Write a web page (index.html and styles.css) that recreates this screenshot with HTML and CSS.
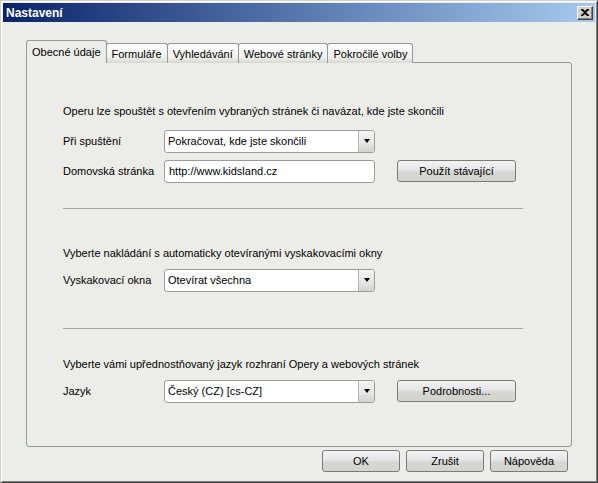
FILE: index.html
```html
<!DOCTYPE html>
<html lang="cs">
<head>
  <meta charset="UTF-8">
  <title>Nastavení</title>
  <link rel="stylesheet" href="styles.css">
</head>
<body>
  <div class="window">
    <div class="titlebar">
      <span class="title">Nastavení</span>
      <span class="close-btn">
        <svg width="8" height="7" viewBox="0 0 8 7"><path d="M0 0h2l2 2 2-2h2v1L5 3.5 8 6v1H6L4 5 2 7H0V6l3-2.5L0 1z" fill="#000"/></svg>
      </span>
    </div>
    <div class="content">
      <div class="tabs">
        <div class="tab active">Obecné údaje</div>
        <div class="tab">Formuláře</div>
        <div class="tab">Vyhledávání</div>
        <div class="tab">Webové stránky</div>
        <div class="tab">Pokročilé volby</div>
      </div>
      <div class="panel">
        <div class="section">
          <p class="desc">Operu lze spouštět s otevřením vybraných stránek či navázat, kde jste skončili</p>
          <div class="row">
            <span class="label">Při spuštění</span>
            <div class="select"><span class="value">Pokračovat, kde jste skončili</span><span class="arrow"></span></div>
          </div>
          <div class="row">
            <span class="label">Domovská stránka</span>
            <div class="field">http://www.kidsland.cz</div>
            <button class="btn side-btn">Použít stávající</button>
          </div>
        </div>
        <hr class="sep sep-first">
        <div class="section">
          <p class="desc desc-tight">Vyberte nakládání s automaticky otevíranými vyskakovacími okny</p>
          <div class="row">
            <span class="label">Vyskakovací okna</span>
            <div class="select"><span class="value">Otevírat všechna</span><span class="arrow"></span></div>
          </div>
        </div>
        <hr class="sep sep-second">
        <div class="section">
          <p class="desc desc-tight">Vyberte vámi upřednostňovaný jazyk rozhraní Opery a webových stránek</p>
          <div class="row">
            <span class="label">Jazyk</span>
            <div class="select"><span class="value">Český (CZ) [cs-CZ]</span><span class="arrow"></span></div>
            <button class="btn side-btn">Podrobnosti...</button>
          </div>
        </div>
      </div>
      <div class="buttons">
        <button class="btn dlg-btn">OK</button>
        <button class="btn dlg-btn">Zrušit</button>
        <button class="btn dlg-btn">Nápověda</button>
      </div>
    </div>
  </div>
</body>
</html>
```

FILE: styles.css
```css
body {
  margin: 0;
  padding: 0;
  font-family: "Liberation Sans", Arial, sans-serif;
  font-size: 11px;
  color: #000;
}

.window {
  box-sizing: border-box;
  width: 598px;
  height: 483px;
  padding: 2px;
  border: 1px solid;
  border-color: #d4d0c8 #404040 #404040 #d4d0c8;
  box-shadow: inset 1px 1px #fff, inset -1px -1px #808080;
  background-color: #ecece9;
  display: flex;
  flex-direction: column;
}

.titlebar {
  height: 19px;
  display: flex;
  align-items: center;
  justify-content: space-between;
  padding: 0 2px 0 3px;
  background: linear-gradient(to right, #0a246a, #a6caf0);
}

.title {
  color: #fff;
  font-weight: bold;
  font-size: 12px;
}

.close-btn {
  box-sizing: border-box;
  width: 16px;
  height: 14px;
  display: flex;
  align-items: center;
  justify-content: center;
  background-color: #d4d0c8;
  border: 1px solid;
  border-color: #fff #404040 #404040 #fff;
  box-shadow: inset -1px -1px #808080;
}

.content {
  flex: 1;
  padding: 19px 23px 0 23px;
  display: flex;
  flex-direction: column;
}

.tabs {
  display: flex;
  align-items: flex-end;
  height: 22px;
  margin-bottom: -1px;
  position: relative;
  z-index: 1;
}

.tab {
  box-sizing: border-box;
  height: 20px;
  padding: 0 5px;
  display: flex;
  align-items: center;
  border: 1px solid #919b9c;
  border-bottom: none;
  border-radius: 3px 3px 0 0;
  background: linear-gradient(to bottom, #fcfcfe 0%, #f0f0ee 70%, #d6d6d2 100%);
  margin-left: -1px;
}

.tab:first-child {
  margin-left: 0;
}

.tab.active {
  height: 23px;
  padding: 0 5px;
  background: #ecece9;
  position: relative;
  z-index: 2;
}

.panel {
  box-sizing: border-box;
  height: 385px;
  border: 1px solid #919b9c;
  border-radius: 0 3px 3px 3px;
  padding: 41px 48px 0 36px;
  display: flex;
  flex-direction: column;
}

.section {
  display: flex;
  flex-direction: column;
}

.desc {
  margin: 0 0 12px 0;
  line-height: 14px;
}

.desc-tight {
  margin-bottom: 9px;
}

.row {
  display: flex;
  align-items: center;
  height: 22px;
}

.row + .row {
  margin-top: 8px;
}

.label {
  width: 101px;
  flex-shrink: 0;
  white-space: nowrap;
}

.select,
.field {
  box-sizing: border-box;
  width: 211px;
  height: 23px;
  border: 1px solid #9c9c9c;
  border-radius: 3px;
  background-color: #fff;
  display: flex;
  align-items: center;
}

.field {
  padding-left: 4px;
}

.value {
  flex: 1;
  padding-left: 3px;
}

.arrow {
  box-sizing: border-box;
  width: 16px;
  height: 21px;
  border-left: 1px solid #b4b4b4;
  border-radius: 0 2px 2px 0;
  background: linear-gradient(to bottom, #f4f4f2 0%, #e6e6e4 60%, #d2d2ce 100%);
  display: flex;
  align-items: center;
  justify-content: center;
}

.arrow::after {
  content: "";
  border-left: 3px solid transparent;
  border-right: 3px solid transparent;
  border-top: 4px solid #000;
}

.btn {
  box-sizing: border-box;
  height: 22px;
  font-family: inherit;
  font-size: 11px;
  color: #000;
  border: 1px solid #7a7a7a;
  border-radius: 3px;
  background: linear-gradient(to bottom, #f2f2f2 0%, #e6e6ea 45%, #d6d6d2 55%, #d2d2ce 100%);
  padding: 0;
}

.side-btn {
  width: 119px;
  margin-left: 22px;
}

.sep {
  border: none;
  border-top: 1px solid #a8a8a8;
  width: 460px;
  margin: 0;
}

.sep-first {
  margin: 26px 0 37px 0;
}

.sep-second {
  margin: 37px 0 28px 0;
}

.buttons {
  display: flex;
  justify-content: flex-end;
  gap: 6px;
  padding: 3px 4px 0 0;
}

.dlg-btn {
  width: 78px;
}
```
